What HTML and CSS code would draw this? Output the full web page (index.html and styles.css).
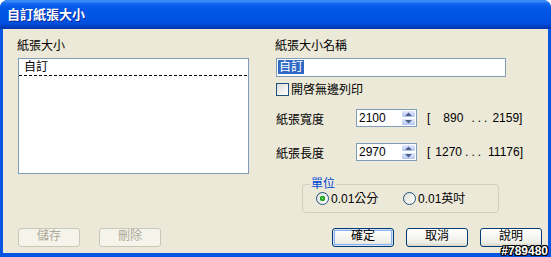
FILE: index.html
```html
<!DOCTYPE html>
<html lang="zh-Hant">
<head>
<meta charset="utf-8">
<title>自訂紙張大小</title>
<link rel="stylesheet" href="styles.css">
</head>
<body>
<div class="window">
  <div class="titlebar"><span class="title">自訂紙張大小</span></div>
  <div class="client">
    <div class="main">
      <div class="col-left">
        <div class="label">紙張大小</div>
        <div class="listbox">
          <div class="list-item">自訂</div>
        </div>
      </div>
      <div class="col-right">
        <div class="label">紙張大小名稱</div>
        <div class="textbox"><span class="sel">自訂</span></div>
        <div class="check-row"><span class="checkbox"></span><span class="check-label">開啓無邊列印</span></div>
        <div class="field-row row-width">
          <span class="field-label">紙張寬度</span>
          <div class="spin">
            <span class="spin-value">2100</span>
            <span class="spin-btns">
              <span class="spin-btn"><svg width="7" height="4" viewBox="0 0 7 4"><path d="M0 4 L3.5 0.5 L7 4 Z" fill="#4D6185"/></svg></span>
              <span class="spin-btn"><svg width="7" height="4" viewBox="0 0 7 4"><path d="M0 0 L3.5 3.5 L7 0 Z" fill="#4D6185"/></svg></span>
            </span>
          </div>
          <span class="range"><span>[</span><span class="r1-min">890</span><span class="dots r1-dots">...</span><span class="r1-max">2159]</span></span>
        </div>
        <div class="field-row row-height">
          <span class="field-label">紙張長度</span>
          <div class="spin">
            <span class="spin-value">2970</span>
            <span class="spin-btns">
              <span class="spin-btn"><svg width="7" height="4" viewBox="0 0 7 4"><path d="M0 4 L3.5 0.5 L7 4 Z" fill="#4D6185"/></svg></span>
              <span class="spin-btn"><svg width="7" height="4" viewBox="0 0 7 4"><path d="M0 0 L3.5 3.5 L7 0 Z" fill="#4D6185"/></svg></span>
            </span>
          </div>
          <span class="range"><span>[</span><span class="r2-min">1270</span><span class="dots r2-dots">...</span><span class="r2-max">11176]</span></span>
        </div>
        <fieldset class="group">
          <legend class="group-title">單位</legend>
          <div class="radios">
            <span class="radio-opt opt-first"><span class="radio checked"></span><span>0.01公分</span></span>
            <span class="radio-opt"><span class="radio"></span><span>0.01英吋</span></span>
          </div>
        </fieldset>
      </div>
    </div>
    <div class="buttons">
      <div class="btn-group btn-left">
        <span class="btn disabled">儲存</span>
        <span class="btn disabled">刪除</span>
      </div>
      <div class="btn-group btn-right">
        <span class="btn default">確定</span>
        <span class="btn">取消</span>
        <span class="btn btn-help">說明</span>
      </div>
    </div>
  </div>
  <div class="watermark">#789480</div>
</div>
</body>
</html>
```
FILE: styles.css
```css
html, body {
  margin: 0;
  padding: 0;
  background: #ffffff;
}

.window {
  position: relative;
  width: 551px;
  height: 257px;
  display: flex;
  flex-direction: column;
  background: #0855E4;
  border-radius: 8px 8px 0 0;
  overflow: hidden;
  font-family: "Liberation Sans", "Noto Sans CJK TC", sans-serif;
  font-size: 12px;
  color: #000;
}

.titlebar {
  flex: none;
  height: 29px;
  display: flex;
  align-items: center;
  padding-left: 7px;
  background: linear-gradient(to bottom,
    #2A7CF6 0px, #4A96FA 1px, #2D7EF6 2px, #0F65EE 4px,
    #0258E8 8px, #0055E5 14px, #0053E2 20px, #0050DE 23px,
    #0046D2 25px, #003DC0 27px, #0033A8 29px);
}

.title {
  color: #ffffff;
  font-weight: bold;
  font-size: 13px;
  line-height: 14px;
  text-shadow: 1px 1px #0A2A9C;
}

.client {
  flex: 1;
  margin: 0 3px 4px 3px;
  background: #ECE9D8;
  display: flex;
  flex-direction: column;
  padding: 10px 6px 6px 14px;
}

.main {
  display: flex;
}

.col-left {
  width: 258px;
  flex: none;
}

.col-right {
  flex: 1;
  display: flex;
  flex-direction: column;
}

.label {
  line-height: 14px;
  height: 14px;
}

.listbox {
  margin: 5px 0 0 1px;
  width: 231px;
  height: 116px;
  box-sizing: border-box;
  border: 1px solid #7F9DB9;
  background: #ffffff;
}

.list-item {
  height: 16px;
  line-height: 16px;
  padding-left: 5px;
  background-image: repeating-linear-gradient(to right, #000 0 3px, transparent 3px 5px);
  background-size: 100% 1px;
  background-position: left bottom;
  background-repeat: no-repeat;
  padding-bottom: 1px;
}

.textbox {
  margin: 5px 0 0 1px;
  width: 230px;
  height: 19px;
  box-sizing: border-box;
  border: 1px solid #7F9DB9;
  background: #ffffff;
  padding: 1px 0 0 1px;
  line-height: 14px;
}

.sel {
  display: inline-block;
  height: 14px;
  padding: 0 1px;
  background: #316AC5;
  color: #ffffff;
}

.check-row {
  margin: 6px 0 0 1px;
  height: 13px;
  display: flex;
  align-items: center;
}

.checkbox {
  width: 13px;
  height: 13px;
  box-sizing: border-box;
  border: 1px solid #1C5180;
  background: linear-gradient(135deg, #DCDCD7 0%, #F2F2EF 60%, #FFFFFF 100%);
  margin-right: 2px;
  flex: none;
}

.check-label {
  line-height: 14px;
}

.field-row {
  margin-left: 1px;
  height: 18px;
  display: flex;
  align-items: center;
}

.row-width {
  margin-top: 13px;
}

.row-height {
  margin-top: 16px;
}

.field-label {
  width: 80px;
  flex: none;
}

.spin {
  width: 61px;
  height: 18px;
  box-sizing: border-box;
  border: 1px solid #7F9DB9;
  background: #ffffff;
  display: flex;
  align-items: center;
  justify-content: space-between;
  padding-left: 2px;
  flex: none;
}

.spin-value {
  line-height: 14px;
}

.spin-btns {
  width: 15px;
  height: 16px;
  display: flex;
  flex-direction: column;
}

.spin-btn {
  flex: 1;
  display: flex;
  align-items: center;
  justify-content: center;
  box-sizing: border-box;
  border: 1px solid #ffffff;
  border-radius: 2px;
  background: linear-gradient(to bottom, #E1EAFE 0%, #C5D4FA 60%, #B4C6F4 100%);
}

.range {
  margin-left: 10px;
  display: flex;
  white-space: pre;
}

.dots {
  letter-spacing: 3px;
}

.r1-min { margin-left: 13px; }
.r1-dots { margin-left: 8px; }
.r1-max { margin-left: 2px; }
.r2-min { margin-left: 5px; }
.r2-dots { margin-left: 3px; }
.r2-max { margin-left: 4px; }

.group {
  margin: 16px 0 0 27px;
  width: 197px;
  box-sizing: border-box;
  border: 1px solid #D0D0BF;
  border-radius: 4px;
  padding: 0 0 7px 7px;
  min-width: 0;
}

.group-title {
  color: #0046D5;
  padding: 0 1px;
  line-height: 14px;
}

.radios {
  margin: 1px 0 0 6px;
  display: flex;
  align-items: center;
  height: 13px;
}

.radio-opt {
  display: flex;
  align-items: center;
  line-height: 14px;
}

.opt-first {
  width: 87px;
}

.radio {
  width: 13px;
  height: 13px;
  box-sizing: border-box;
  border: 1px solid #1C5180;
  border-radius: 50%;
  background: linear-gradient(135deg, #DCDCD7 0%, #F4F4F0 60%, #FFFFFF 100%);
  margin-right: 2px;
  flex: none;
}

.radio.checked {
  background:
    radial-gradient(circle at 50% 50%, #6EE06A 0, #2BAE2B 1.5px, #1C9A1C 2.5px, transparent 3px),
    linear-gradient(135deg, #DCDCD7 0%, #F4F4F0 60%, #FFFFFF 100%);
}

.buttons {
  margin-top: auto;
  display: flex;
  align-items: center;
}

.btn-group {
  display: flex;
}

.btn-left {
  margin-left: 1px;
  gap: 19px;
}

.btn-right {
  margin-left: auto;
  gap: 12px;
}

.btn {
  width: 62px;
  height: 19px;
  box-sizing: border-box;
  border: 1px solid #003C74;
  border-radius: 3px;
  display: flex;
  align-items: center;
  justify-content: center;
  line-height: 13px;
  padding-bottom: 2px;
  background: linear-gradient(to bottom, #FFFFFF 0%, #F7F7F4 40%, #EEEDE5 80%, #D8D4C8 100%);
}

.btn.default {
  box-shadow: inset 0 0 0 1px #CFE0FB, inset 0 0 0 2px #8DB2EE;
}

.btn.disabled {
  border-color: #C9C7BA;
  background: #F5F4EA;
  color: #ACA899;
}

.watermark {
  position: absolute;
  right: 3px;
  bottom: 0;
  font-family: "Liberation Sans", sans-serif;
  font-weight: bold;
  font-size: 12px;
  line-height: 12px;
  color: #ffffff;
  text-shadow: 1px 0 #000, -1px 0 #000, 0 1px #000, 0 -1px #000,
               1px 1px #000, -1px -1px #000, 1px -1px #000, -1px 1px #000;
}
```
